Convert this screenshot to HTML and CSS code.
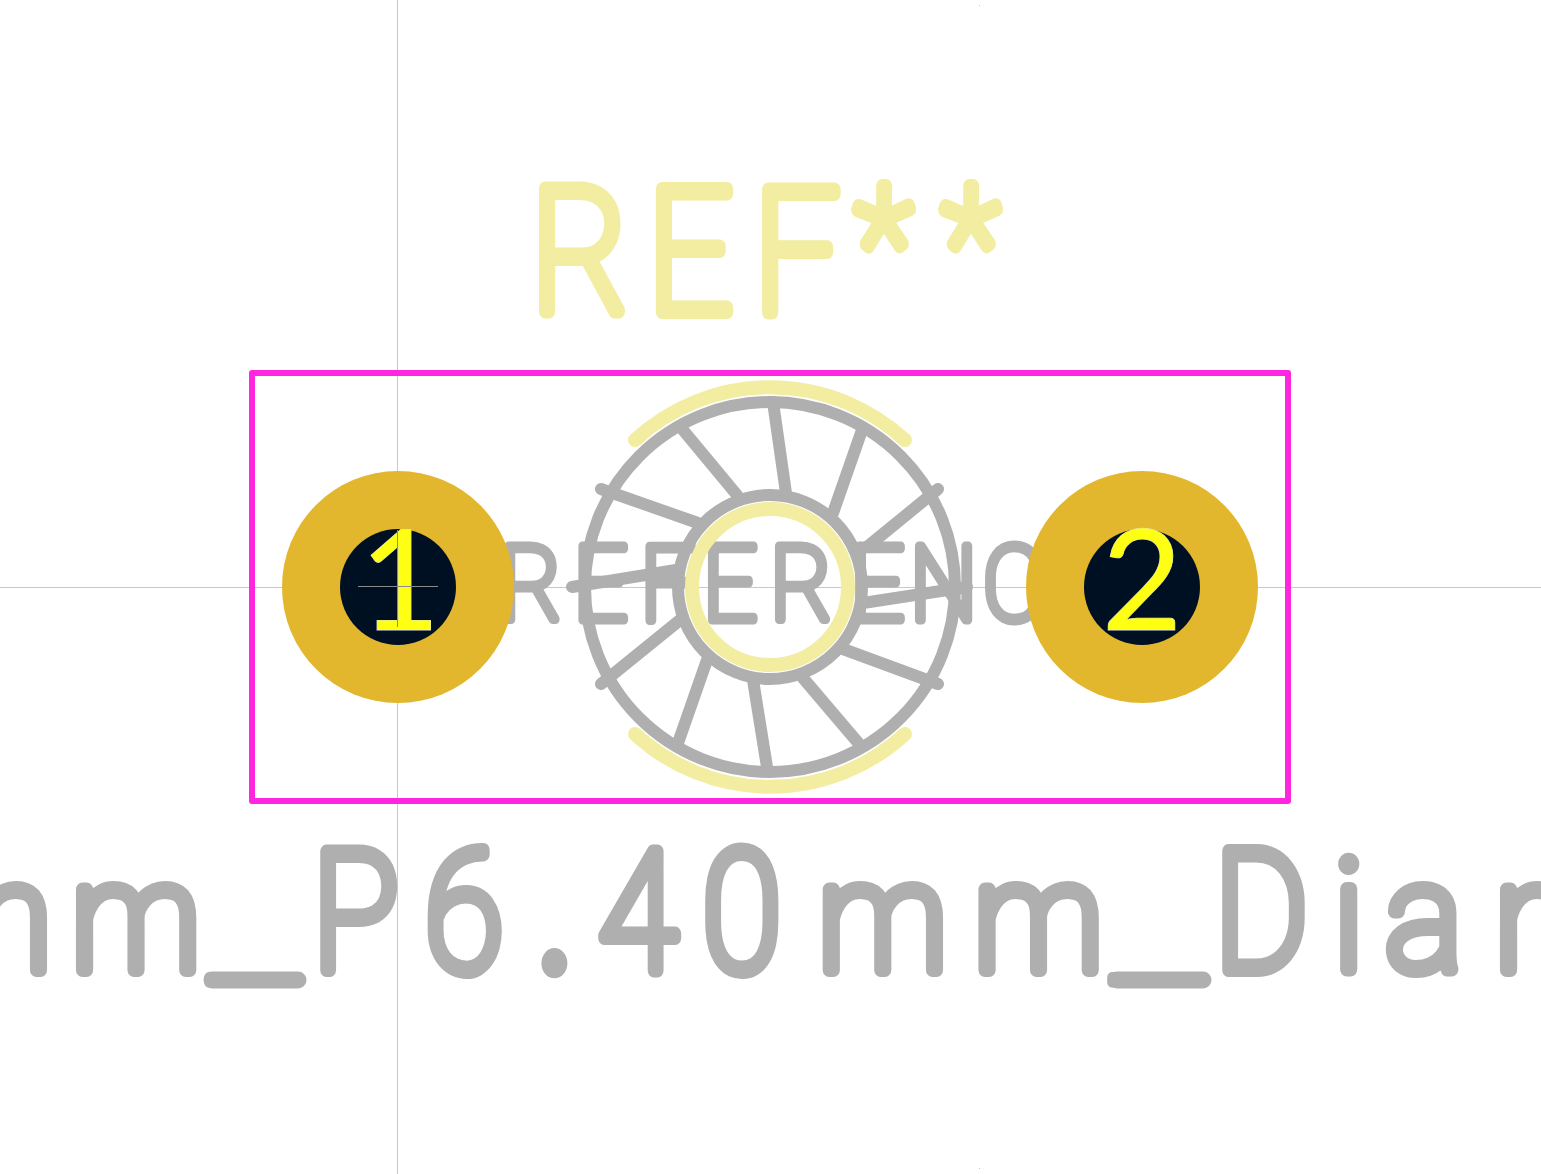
FILE: index.html
```html
<!DOCTYPE html>
<html lang="en">
<head>
<meta charset="utf-8">
<title>Footprint view</title>
<link rel="stylesheet" href="styles.css">
</head>
<body>
<svg class="board" viewBox="0 0 1541 1174" width="1541" height="1174" xmlns="http://www.w3.org/2000/svg">
  <line class="axis" x1="397.5" y1="0" x2="397.5" y2="1174"/>
  <line class="axis" x1="0" y1="587.5" x2="1541" y2="587.5"/>
  <rect class="tick" x="979" y="5" width="1" height="1"/>
  <rect class="tick" x="979" y="1168" width="1" height="1"/>

  <text class="label label-silk" transform="scale(.87 1)" y="312 312 312 297 297" x="610 744 866 983 1083">REF<tspan class="stars">**</tspan></text>
  <text class="label label-fab-small" transform="scale(.92 1)" y="620.500" x="543 623 696 764 837 924 989 1068 1142">REFERENCE</text>

  <text class="label label-fab lower" transform="scale(.95 1)" y="970.500" x="-82 75">mm</text>
  <text class="label label-fab" transform="scale(.86 1)" y="978.500 970.500 970.500 970.500 970.500 970.500" x="243 363 494 615 696 817"><tspan class="rule">_</tspan>P6<tspan class="dot">.</tspan>40</text>
  <text class="label label-fab lower" transform="scale(.95 1)" y="970.500" x="861 1025">mm</text>
  <text class="label label-fab" transform="scale(.86 1)" y="978.500 970.500" x="1293 1412"><tspan class="rule">_</tspan>D</text>
  <text class="label label-fab lower" transform="scale(.95 1)" y="970.500" x="1404 1459 1574">iam</text>

  <g class="score">
    <line x1="212" y1="980" x2="298" y2="980"/>
    <line x1="1117" y1="980" x2="1203" y2="980"/>
  </g>

  <g class="fab">
    <circle cx="770" cy="587" r="185"/>
    <circle cx="770" cy="587" r="92"/>
    <line x1="773" y1="402" x2="786" y2="493"/>
    <line x1="862" y1="430" x2="833" y2="513"/>
    <line x1="938" y1="489" x2="867" y2="547"/>
    <line x1="967" y1="587" x2="863" y2="603"/>
    <line x1="938" y1="684" x2="843" y2="649"/>
    <line x1="860" y1="745" x2="803" y2="678"/>
    <line x1="767" y1="767" x2="753" y2="680"/>
    <line x1="678" y1="743" x2="707" y2="660"/>
    <line x1="601" y1="684" x2="680" y2="620"/>
    <line x1="572" y1="587" x2="676" y2="570"/>
    <line x1="601" y1="489" x2="698" y2="523"/>
    <line x1="683" y1="430" x2="737" y2="495"/>
  </g>

  <g class="silk">
    <circle cx="770" cy="587" r="78"/>
    <path d="M635 440A199 199 0 0 1 905 440"/>
    <path d="M635 734A199 199 0 0 0 905 734"/>
  </g>

  <rect class="courtyard" x="252" y="373" width="1036" height="428"/>

  <circle class="pad" cx="398" cy="587" r="116"/>
  <circle class="pad" cx="1142" cy="587" r="116"/>
  <circle class="hole" cx="398" cy="587" r="58"/>
  <circle class="hole" cx="1142" cy="587" r="58"/>

  <text class="pad-num" x="400" y="630">1</text>
  <text class="pad-num" x="1142" y="630">2</text>

  <line class="cross" x1="358" y1="586.500" x2="438" y2="586.500"/>
  <line class="cross" x1="397.500" y1="530" x2="397.500" y2="627"/>
</svg>
</body>
</html>
```
FILE: styles.css
```css
html, body {
  margin: 0;
  padding: 0;
  background: #ffffff;
  overflow: hidden;
}

.board {
  display: block;
}

.axis {
  stroke: #c9c9c9;
  stroke-width: 1;
}

.tick {
  fill: #c4c4c4;
}

.label {
  font-family: Roboto, "Liberation Sans", sans-serif;
  font-weight: 100;
  stroke-linejoin: round;
  stroke-linecap: round;
}

.label-silk {
  font-size: 173px;
  fill: #f2eda1;
  stroke: #f2eda1;
  stroke-width: 14px;
}

.stars {
  font-size: 155px;
}

.label-fab-small {
  font-size: 104px;
  fill: #afafaf;
  stroke: #afafaf;
  stroke-width: 9px;
}

.label-fab {
  font-size: 167px;
  fill: #afafaf;
  stroke: #afafaf;
  stroke-width: 14px;
}

.lower {
  font-size: 152px;
}

.dot {
  font-size: 300px;
}

.rule {
  stroke-width: 11px;
}

.score {
  stroke: #afafaf;
  stroke-width: 17px;
  stroke-linecap: round;
}

.fab {
  fill: none;
  stroke: #afafaf;
  stroke-width: 12px;
  stroke-linecap: round;
}

.silk {
  fill: none;
  stroke: #f2eda1;
  stroke-width: 14px;
  stroke-linecap: round;
}

.courtyard {
  fill: none;
  stroke: #ff26e2;
  stroke-width: 6px;
  stroke-linejoin: round;
}

.pad {
  fill: #e2b72d;
}

.hole {
  fill: #001023;
}

.pad-num {
  font-family: Lato, "DejaVu Sans", sans-serif;
  font-size: 139px;
  text-anchor: middle;
  fill: #ffff14;
  stroke: #d8d8d8;
  stroke-width: 1px;
  paint-order: stroke;
}

.cross {
  stroke: #8a8a8a;
  stroke-width: 1;
}
```
